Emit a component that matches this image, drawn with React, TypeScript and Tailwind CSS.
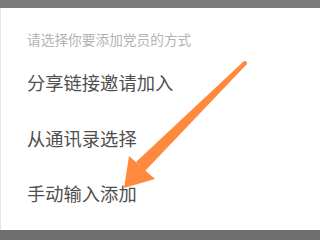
import React from "react";

export default function App() {
  return (
    <div className="relative w-[320px] h-[240px] overflow-hidden bg-white" style={{ fontFamily: '"Noto Sans CJK SC", "Noto Sans", sans-serif' }}>
      <div className="h-[8px] bg-[#7a7a7a]" />
      <div className="h-[222px] bg-white border-l border-[#e6e6e6] flex flex-col pl-[26px]">
        <div className="mt-[24px] text-[13.7px] leading-[14px] text-[#b3b3b3]">请选择你要添加党员的方式</div>
        <div className="mt-[27px] text-[18.3px] leading-[18px] text-[#4f4f4f]">分享链接邀请加入</div>
        <div className="mt-[38px] text-[18.3px] leading-[18px] text-[#4f4f4f]">从通讯录选择</div>
        <div className="mt-[37px] text-[18.3px] leading-[18px] text-[#4f4f4f]">手动输入添加</div>
      </div>
      <div className="h-[10px] bg-[#6e6e6e]" />
      <svg className="absolute left-0 top-0" width="320" height="240" viewBox="0 0 320 240">
        <polygon points="243.5,61.5 246.5,64.5 145,171 136,162" fill="#ff8a3d" />
        <circle cx="245" cy="63" r="2.1" fill="#ff8a3d" />
        <polygon points="124,188 129,156 155,179" fill="#ff8a3d" />
      </svg>
    </div>
  );
}
